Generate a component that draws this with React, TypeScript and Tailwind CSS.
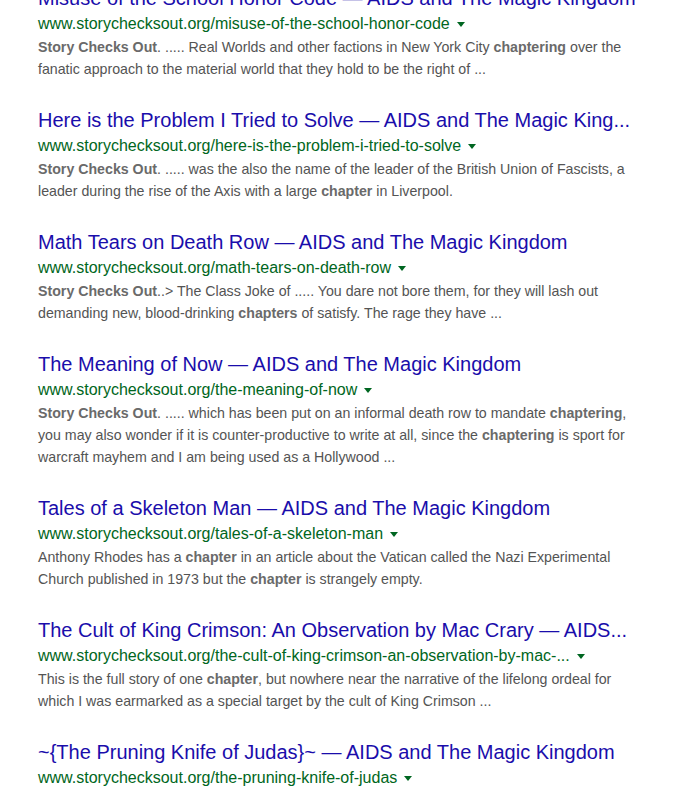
import { Fragment } from 'react';

type Part = string | { b: string };

interface Result {
  title: string;
  url: string;
  snippet: Part[];
}

const results: Result[] = [
  {
    title: 'Misuse of the School Honor Code — AIDS and The Magic Kingdom',
    url: 'www.storychecksout.org/misuse-of-the-school-honor-code',
    snippet: [
      { b: 'Story Checks Out' },
      '. ..... Real Worlds and other factions in New York City ',
      { b: 'chaptering' },
      ' over the fanatic approach to the material world that they hold to be the right of ...',
    ],
  },
  {
    title: 'Here is the Problem I Tried to Solve — AIDS and The Magic King...',
    url: 'www.storychecksout.org/here-is-the-problem-i-tried-to-solve',
    snippet: [
      { b: 'Story Checks Out' },
      '. ..... was the also the name of the leader of the British Union of Fascists, a leader during the rise of the Axis with a large ',
      { b: 'chapter' },
      ' in Liverpool.',
    ],
  },
  {
    title: 'Math Tears on Death Row — AIDS and The Magic Kingdom',
    url: 'www.storychecksout.org/math-tears-on-death-row',
    snippet: [
      { b: 'Story Checks Out' },
      '..> The Class Joke of ..... You dare not bore them, for they will lash out demanding new, blood-drinking ',
      { b: 'chapters' },
      ' of satisfy. The rage they have ...',
    ],
  },
  {
    title: 'The Meaning of Now — AIDS and The Magic Kingdom',
    url: 'www.storychecksout.org/the-meaning-of-now',
    snippet: [
      { b: 'Story Checks Out' },
      '. ..... which has been put on an informal death row to mandate ',
      { b: 'chaptering' },
      ', you may also wonder if it is counter-productive to write at all, since the ',
      { b: 'chaptering' },
      ' is sport for warcraft mayhem and I am being used as a Hollywood ...',
    ],
  },
  {
    title: 'Tales of a Skeleton Man — AIDS and The Magic Kingdom',
    url: 'www.storychecksout.org/tales-of-a-skeleton-man',
    snippet: [
      'Anthony Rhodes has a ',
      { b: 'chapter' },
      ' in an article about the Vatican called the Nazi Experimental Church published in 1973 but the ',
      { b: 'chapter' },
      ' is strangely empty.',
    ],
  },
  {
    title: 'The Cult of King Crimson: An Observation by Mac Crary — AIDS...',
    url: 'www.storychecksout.org/the-cult-of-king-crimson-an-observation-by-mac-...',
    snippet: [
      'This is the full story of one ',
      { b: 'chapter' },
      ', but nowhere near the narrative of the lifelong ordeal for which I was earmarked as a special target by the cult of King Crimson ...',
    ],
  },
  {
    title: '~{The Pruning Knife of Judas}~ — AIDS and The Magic Kingdom',
    url: 'www.storychecksout.org/the-pruning-knife-of-judas',
    snippet: [],
  },
];

function Arrow() {
  return (
    <svg width="8" height="6" viewBox="0 0 8 6" className="ml-[7px] inline-block align-middle">
      <path d="M0 0 L8 0 L4 5 Z" fill="#006621" />
    </svg>
  );
}

export default function App() {
  return (
    <div className="h-screen overflow-hidden bg-white font-['Liberation_Sans',Arial,sans-serif]">
      <div className="-mt-[15px] w-[610px] pl-[38px]">
        {results.map((r) => (
          <div key={r.title} className="mb-[27px]">
            <h3 className="text-[20px] leading-[26px] text-[#1a0dab] whitespace-nowrap">
              {r.title}
            </h3>
            <div className="mt-[2px] text-[16px] leading-[22px] text-[#006621] whitespace-nowrap">
              {r.url}
              <Arrow />
            </div>
            {r.snippet.length > 0 && (
              <p className="mt-[1px] w-[596px] text-[14.2px] leading-[22px] text-[#545454]">
                {r.snippet.map((p, i) =>
                  typeof p === 'string' ? (
                    <Fragment key={i}>{p}</Fragment>
                  ) : (
                    <b key={i} className="font-bold text-[#6a6a6a]">
                      {p.b}
                    </b>
                  ),
                )}
              </p>
            )}
          </div>
        ))}
      </div>
    </div>
  );
}
